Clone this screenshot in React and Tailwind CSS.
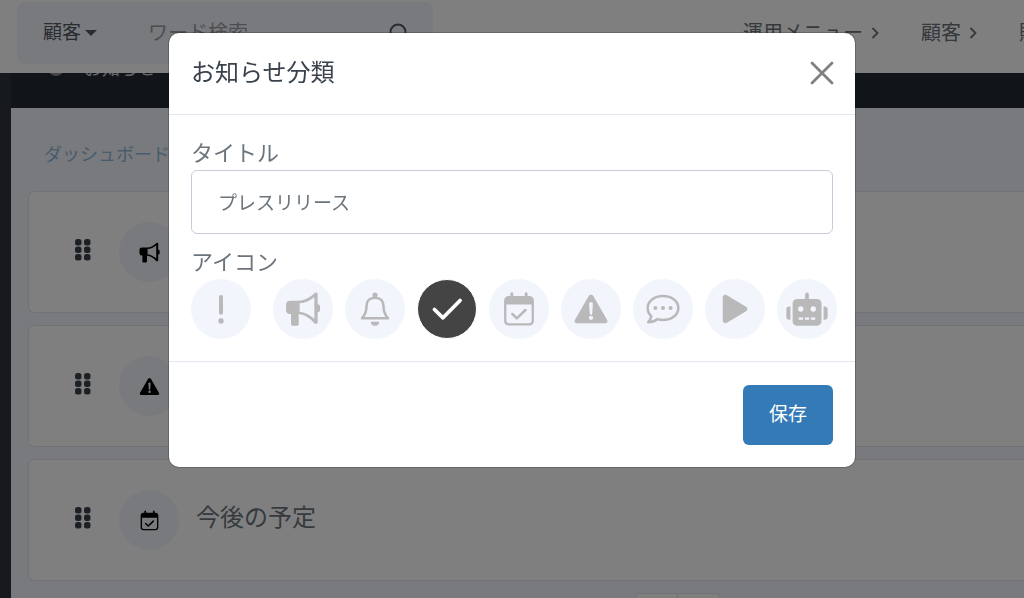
import { useState } from 'react';

const IconExclamation = () => (
    <>
        <path d="M12 3v11.800" fill="none" stroke="currentColor" strokeWidth="3" strokeLinecap="round" />
        <circle cx="12" cy="21" r="2" />
    </>
);

const IconMegaphone = () => (
    <>
        <path d="M2.300 5.800h7v10h-7a3 3 0 0 1-3-3v-4a3 3 0 0 1 3-3Z" />
        <rect x="3" y="13" width="5.800" height="11.500" rx="1.200" />
        <path
            fillRule="evenodd"
            d="M8.800 5.800C13.500 5.500 17.500 3 20.500.2 21.500-.8 23-.4 23 1v20.800c0 1.400-1.500 1.900-2.500.9-3-3.200-7-6.400-11.700-6.900V5.800ZM9.300 7.700v6.400c4.200.4 8 2.500 11.200 5.300V3.100C17.300 5.600 13.500 7.400 9.300 7.700Z"
        />
        <path d="M22.500 8.500h.6c.9 0 1.700.8 1.700 1.700v2.600c0 .9-.8 1.700-1.700 1.700h-.6v-6Z" />
    </>
);

const IconBell = () => (
    <>
        <path
            d="M2.200 19c1.800-1.800 3.400-4 3.400-9 0-4 2.400-6.500 6.400-6.500s6.400 2.500 6.400 6.500c0 5 1.600 7.200 3.400 9H2.200Z"
            fill="none"
            stroke="currentColor"
            strokeWidth="1.900"
            strokeLinejoin="round"
        />
        <circle cx="12" cy="1.600" r="1.900" />
        <path d="M8.900 21.500h6.200a3.100 3 0 0 1-6.200 0Z" />
    </>
);

const IconCheck = () => (
    <path d="M2.600 12.400L9 18.600 21.800 5.600" fill="none" stroke="currentColor" strokeWidth="2.800" strokeLinecap="round" strokeLinejoin="round" />
);

const IconCalendar = () => (
    <g transform="translate(-0.9 -0.8) scale(1.075)">
        <path d="M7 .2c.6 0 1 .4 1 1v1.600h8V1.200c0-.6.4-1 1-1s1 .4 1 1v1.600h1.200c1.800 0 3.200 1.400 3.200 3.200v14.200c0 1.800-1.400 3.200-3.200 3.200H4.800A3.200 3.200 0 0 1 1.600 20.200V6c0-1.800 1.400-3.200 3.200-3.200H6V1.200c0-.6.4-1 1-1ZM3.200 8.800v11.300c0 1 .8 1.700 1.700 1.700h14.200c1 0 1.700-.7 1.700-1.700V8.800H3.200Z" />
        <path d="M7.400 15.400l3.100 3 6-5.800" fill="none" stroke="currentColor" strokeWidth="1.800" strokeLinecap="round" strokeLinejoin="round" />
    </g>
);

const IconWarning = () => (
    <path
        fillRule="evenodd"
        d="M10.300 2.200c.8-1.300 2.600-1.300 3.400 0L24.100 20.200c.7 1.200-.1 2.500-1.500 2.500H1.400c-1.400 0-2.200-1.300-1.500-2.500L10.300 2.200ZM12 6.800c-.9 0-1.500.6-1.400 1.500l.5 7.200c.1 1 1.700 1 1.800 0l.5-7.200C13.500 7.400 12.900 6.800 12 6.800Zm0 10.200a1.600 1.600 0 1 0 0 3.200 1.600 1.600 0 0 0 0-3.200Z"
    />
);

const IconComment = () => (
    <>
        <path
            d="M12 2.200c6.500 0 11.500 3.900 11.500 9s-5 9-11.500 9c-1.500 0-3-.2-4.300-.6-1.800 1.400-4.100 2.200-6.800 2.300 1.200-1.200 2-2.800 2.300-4.500C1.400 15.700.5 13.500.5 11.200c0-5.100 5-9 11.500-9Z"
            fill="none"
            stroke="currentColor"
            strokeWidth="1.900"
            strokeLinejoin="round"
        />
        <circle cx="6.300" cy="11.200" r="1.500" />
        <circle cx="12" cy="11.200" r="1.500" />
        <circle cx="17.700" cy="11.200" r="1.500" />
    </>
);

const IconPlay = () => (
    <path d="M2.800 3.400c0-1.700 1.700-2.600 3.100-1.700l14.400 8.600c1.300.8 1.300 2.600 0 3.400L5.900 22.300c-1.400.9-3.100 0-3.100-1.700V3.400Z" />
);

const IconRobot = () => (
    <path
        fillRule="evenodd"
        d="M12-.4c.8 0 1.400.6 1.400 1.400v3.500h6.200c1.800 0 3.300 1.500 3.300 3.300v13.400c0 1.800-1.500 3.300-3.300 3.300H4.500a3.300 3.300 0 0 1-3.300-3.300V7.800c0-1.800 1.500-3.300 3.300-3.300h6.100V1c0-.8.6-1.400 1.400-1.400ZM7.300 10a2 2 0 1 0 0 4 2 2 0 0 0 0-4Zm9.400 0a2 2 0 1 0 0 4 2 2 0 0 0 0-4ZM5.800 18.400v1.600H9v-1.600H5.800Zm4.600 0v1.600h3.200v-1.600h-3.200Zm4.600 0v1.600h3.200v-1.600H15ZM-.4 10.200V20h-1.100a2 2 0 0 1-2-2v-5.800c0-1.100.9-2 2-2h1.100Zm24.800 0h1.100c1.100 0 2 .9 2 2V18c0 1.100-.9 2-2 2h-1.100v-9.800Z"
    />
);

const icons = [
    { id: 'exclamation', label: '重要', Icon: IconExclamation },
    { id: 'megaphone', label: 'お知らせ', Icon: IconMegaphone },
    { id: 'bell', label: '通知', Icon: IconBell },
    { id: 'check', label: '完了', Icon: IconCheck },
    { id: 'calendar', label: '予定', Icon: IconCalendar },
    { id: 'warning', label: '注意', Icon: IconWarning },
    { id: 'comment', label: 'コメント', Icon: IconComment },
    { id: 'play', label: '動画', Icon: IconPlay },
    { id: 'robot', label: 'ロボット', Icon: IconRobot },
];

const rows = [
    { id: 1, title: '', Icon: IconMegaphone },
    { id: 2, title: '', Icon: IconWarning },
    { id: 3, title: '今後の予定', Icon: IconCalendar },
];

function Glyph({ Icon, className }) {
    return (
        <svg viewBox="0 0 24 24" fill="currentColor" className={`overflow-visible ${className}`} aria-hidden="true">
            <Icon />
        </svg>
    );
}

function Chevron() {
    return (
        <svg viewBox="0 0 8 12" className="h-3 w-2" fill="none" stroke="currentColor" strokeWidth="1.800" aria-hidden="true">
            <path d="M1.500 1l5 5-5 5" />
        </svg>
    );
}

function Header() {
    return (
        <header className="relative z-10 flex h-[73px] shrink-0 items-start justify-between bg-white pl-[17px] pt-0.5">
            <form className="flex h-[62px] w-[416px] shrink-0 items-center rounded-lg bg-[#f2f5fc] pl-[26px] pr-6">
                <button type="button" className="flex w-[105px] shrink-0 items-center gap-1 text-[19px] text-[#505862]">
                    顧客
                    <svg viewBox="0 0 12 6" className="h-1.5 w-3" fill="currentColor" aria-hidden="true">
                        <path d="M0 0h12L6 6z" />
                    </svg>
                </button>
                <input
                    type="text"
                    aria-label="ワード検索"
                    placeholder="ワード検索"
                    className="min-w-0 flex-1 bg-transparent text-[20px] placeholder:text-[#9a9ca2]"
                />
                <button type="button" aria-label="検索">
                    <svg viewBox="0 0 20 20" className="size-5" fill="none" stroke="#505862" strokeWidth="2" aria-hidden="true">
                        <circle cx="9" cy="9" r="7.500" />
                        <path d="M14.500 14.500L19 19" />
                    </svg>
                </button>
            </form>
            <nav className="flex h-[62px] w-[281px] shrink-0 items-center gap-[42px] overflow-hidden whitespace-nowrap text-[20px] text-[#6b7078]">
                <a href="#menu" className="flex shrink-0 items-center gap-2">
                    運用メニュー <Chevron />
                </a>
                <a href="#customers" className="flex shrink-0 items-center gap-2">
                    顧客 <Chevron />
                </a>
                <a href="#sales" className="shrink-0">
                    販売
                </a>
            </nav>
        </header>
    );
}

function Row({ title, Icon }) {
    return (
        <li className="flex h-[122px] items-center rounded-l-md border border-r-0 border-[#e2e5ec] bg-white pl-[46px]">
            <svg viewBox="0 0 16 22" className="mb-1 h-[22px] w-4 shrink-0" fill="#3a424c" aria-hidden="true">
                <rect x="0" y="0" width="6.500" height="6.500" rx="2.500" />
                <rect x="9" y="0" width="6.500" height="6.500" rx="2.500" />
                <rect x="0" y="7.500" width="6.500" height="6.500" rx="2.500" />
                <rect x="9" y="7.500" width="6.500" height="6.500" rx="2.500" />
                <rect x="0" y="15" width="6.500" height="6.500" rx="2.500" />
                <rect x="9" y="15" width="6.500" height="6.500" rx="2.500" />
            </svg>
            <span className="ml-7 flex size-[60px] shrink-0 items-center justify-center rounded-full bg-[#f2f5fc] text-black">
                <Glyph Icon={Icon} className="size-[19px]" />
            </span>
            <span className="mb-1 ml-[17px] text-[24px] text-[#6c757d]">{title}</span>
        </li>
    );
}

function NoticeModal() {
    const [title, setTitle] = useState('プレスリリース');
    const [selected, setSelected] = useState('check');

    return (
        <div className="fixed inset-0 z-20 flex items-start justify-center bg-black/50 pt-[33px]">
            <div role="dialog" aria-modal="true" aria-labelledby="modal-title" className="w-[686px] rounded-[10px] bg-white ring-1 ring-black/20">
                <div className="flex h-[82px] items-center justify-between border-b border-[#e1e6ef] px-[22px] pb-0.5">
                    <h2 id="modal-title" className="text-[24px] text-[#3a424c]">
                        お知らせ分類
                    </h2>
                    <button type="button" aria-label="閉じる" className="text-[#808080]">
                        <svg viewBox="0 0 22 22" className="size-[22px] overflow-visible" fill="none" stroke="currentColor" strokeWidth="2.800" strokeLinecap="round" aria-hidden="true">
                            <path d="M1 1l20 20M21 1L1 21" />
                        </svg>
                    </button>
                </div>

                <div className="px-[22px] pb-[22px] pt-[23px] text-[#6c757d]">
                    <label htmlFor="notice-title" className="block text-[22px] leading-8">
                        タイトル
                    </label>
                    <input
                        id="notice-title"
                        type="text"
                        value={title}
                        onChange={(e) => setTitle(e.target.value)}
                        className="h-16 w-full rounded-md border border-[#c8cddb] bg-white px-[26px] pb-0.5 text-[19px]"
                    />
                    <fieldset className="mt-[13px]">
                        <legend className="text-[22px] leading-8">アイコン</legend>
                        <div className="flex gap-3">
                            {icons.map(({ id, label, Icon }) => (
                                <label key={id} className="shrink-0 cursor-pointer first:mr-2.5">
                                    <input
                                        type="radio"
                                        name="icon"
                                        value={id}
                                        aria-label={label}
                                        checked={selected === id}
                                        onChange={() => setSelected(id)}
                                        className="peer sr-only"
                                    />
                                    <span className="flex size-[60px] items-center justify-center rounded-full border border-transparent bg-[#f2f5fc] text-[#b9b9b9] peer-checked:border-white peer-checked:bg-[#444] peer-checked:text-white">
                                        <Glyph Icon={Icon} className="size-8" />
                                    </span>
                                </label>
                            ))}
                        </div>
                    </fieldset>
                </div>

                <div className="flex justify-end border-t border-[#e1e6ef] px-[22px] pb-[22px] pt-[23px]">
                    <button type="button" className="h-[60px] rounded-md bg-[#337ab7] px-[26px] text-[19px] text-white">
                        保存
                    </button>
                </div>
            </div>
        </div>
    );
}

export default function App() {
    return (
        <div className="flex h-screen flex-col overflow-hidden bg-[#f2f5fc] font-['Liberation_Sans','Noto_Sans_CJK_JP',sans-serif]">
            <Header />
            <div className="flex min-h-0 flex-1">
                <aside className="w-[11px] shrink-0 bg-[#2c333b]" />
                <div className="min-w-0 flex-1">
                    {/* the page bar is scrolled up behind the header */}
                    <div className="-mt-7 flex h-[63px] items-start gap-5 bg-[#222a32] pl-[37px] pt-3.5 text-[18px] leading-5 text-[#c9ced6]">
                        <span className="mt-px size-4 rounded-full bg-[#8d8790]" />
                        お知らせ
                    </div>
                    <main className="pl-[17px]">
                        <nav className="flex h-[83px] items-center pl-4 pt-3 text-[18px]">
                            <a href="#dashboard" className="text-[#8fb8d8]">
                                ダッシュボード
                            </a>
                        </nav>
                        <ul className="flex flex-col gap-3">
                            {rows.map((row) => (
                                <Row key={row.id} title={row.title} Icon={row.Icon} />
                            ))}
                        </ul>
                        <div className="mt-3 flex justify-center pl-[302px]">
                            <button type="button" aria-label="前へ" className="h-9 w-11 rounded-l-md border border-[#dfe3ea] bg-white" />
                            <button type="button" aria-label="次へ" className="-ml-px h-9 w-11 rounded-r-md border border-[#dfe3ea] bg-white" />
                        </div>
                    </main>
                </div>
            </div>
            <NoticeModal />
        </div>
    );
}
